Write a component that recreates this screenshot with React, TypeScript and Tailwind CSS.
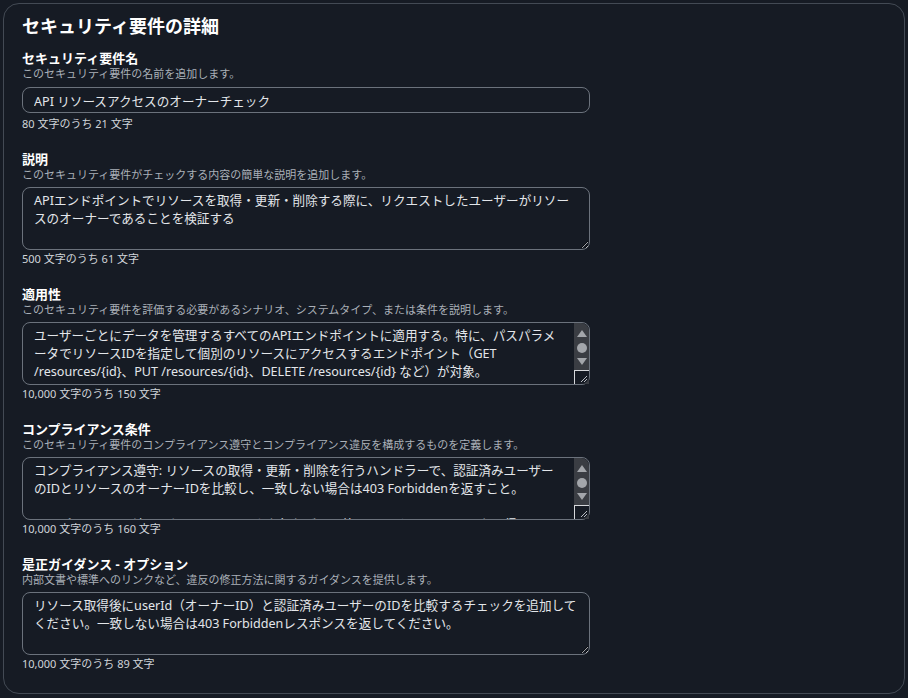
import React from 'react';

const fieldFont = { fontFamily: '"Noto Sans", "Noto Sans CJK JP", sans-serif' };

interface FieldProps {
  label: string;
  hint: string;
  value: string;
  counter: string;
  multiline?: boolean;
  scroll?: boolean;
}

// fake classic scrollbar drawn over a textarea whose text overflows
const ScrollBar = () => (
  <div className="absolute right-px top-px bottom-px w-[15px] flex flex-col rounded-tr-lg bg-[#3a3d43]">
    <div className="flex-1 flex flex-col items-center justify-evenly pt-0.5 text-[#a3a6ab]">
      <svg width="10" height="7" viewBox="0 0 10 7"><path d="M5 0L10 7H0z" fill="currentColor" /></svg>
      <div className="w-[10px] h-[10px] rounded-full bg-[#a3a6ab]" />
      <svg width="10" height="7" viewBox="0 0 10 7"><path d="M0 0h10L5 7z" fill="currentColor" /></svg>
    </div>
    <div className="h-[14px] border-l border-t border-[#d6d8db] bg-[#161b24] flex items-end justify-end rounded-br-lg">
      <svg width="9" height="9" viewBox="0 0 9 9" className="mb-[1px] mr-[1px]">
        <path d="M8 2L2 8M8 5L5 8" stroke="#b8bcc2" strokeWidth="1" />
      </svg>
    </div>
  </div>
);

const Field: React.FC<FieldProps> = ({ label, hint, value, counter, multiline, scroll }) => (
  <div className="mb-5">
    <p className="text-[13px] leading-4 font-bold text-white">{label}</p>
    <p className="mt-px text-[11px] leading-[14px] text-[#aab0b8]">{hint}</p>
    {multiline ? (
      <div className="relative mt-[5px] w-[568px]">
        <textarea
          readOnly
          defaultValue={value}
          className={`block w-full h-[63px] rounded-lg border border-[#6b727c] bg-transparent pl-[11px] ${scroll ? 'pr-[26px] overflow-hidden resize-none' : 'pr-[11px]'} pt-[4px] pb-[4px] text-[12.6px] leading-[18px] text-[#e3e6ea] outline-none`}
          style={fieldFont}
        />
        {scroll && <ScrollBar />}
      </div>
    ) : (
      <input
        readOnly
        defaultValue={value}
        className="mt-[6px] block w-[568px] h-[26px] rounded-lg border border-[#6b727c] bg-transparent px-[11px] text-[12.6px] text-[#e3e6ea] outline-none"
        style={fieldFont}
      />
    )}
    <p className={`${multiline ? 'mt-0.5' : 'mt-1'} text-[11px] leading-[14px] text-[#d0d4d9]`}>{counter}</p>
  </div>
);

export default function App() {
  return (
    <div className="min-h-[698px] bg-[#161b24] p-[3px] [color-scheme:dark]" style={fieldFont}>
      <div className="rounded-2xl border border-[#434a54] pl-[18px] pr-4 pt-[10px] pb-[2px] min-h-[689px]">
        <h2 className="text-[18px] leading-6 font-bold text-white mb-3">セキュリティ要件の詳細</h2>
        <Field
          label="セキュリティ要件名"
          hint="このセキュリティ要件の名前を追加します。"
          value="API リソースアクセスのオーナーチェック"
          counter="80 文字のうち 21 文字"
        />
        <Field
          multiline
          label="説明"
          hint="このセキュリティ要件がチェックする内容の簡単な説明を追加します。"
          value="APIエンドポイントでリソースを取得・更新・削除する際に、リクエストしたユーザーがリソースのオーナーであることを検証する"
          counter="500 文字のうち 61 文字"
        />
        <Field
          multiline
          scroll
          label="適用性"
          hint="このセキュリティ要件を評価する必要があるシナリオ、システムタイプ、または条件を説明します。"
          value="ユーザーごとにデータを管理するすべてのAPIエンドポイントに適用する。特に、パスパラメータでリソースIDを指定して個別のリソースにアクセスするエンドポイント（GET /resources/{id}、PUT /resources/{id}、DELETE /resources/{id} など）が対象。"
          counter="10,000 文字のうち 150 文字"
        />
        <Field
          multiline
          scroll
          label="コンプライアンス条件"
          hint="このセキュリティ要件のコンプライアンス遵守とコンプライアンス違反を構成するものを定義します。"
          value={'コンプライアンス遵守: リソースの取得・更新・削除を行うハンドラーで、認証済みユーザーのIDとリソースのオーナーIDを比較し、一致しない場合は403 Forbiddenを返すこと。\n\nコンプライアンス違反: オーナーチェックを行わずに、他のユーザーのリソースを取得・更新・削除できる場合。'}
          counter="10,000 文字のうち 160 文字"
        />
        <Field
          multiline
          label="是正ガイダンス - オプション"
          hint="内部文書や標準へのリンクなど、違反の修正方法に関するガイダンスを提供します。"
          value="リソース取得後にuserId（オーナーID）と認証済みユーザーのIDを比較するチェックを追加してください。一致しない場合は403 Forbiddenレスポンスを返してください。"
          counter="10,000 文字のうち 89 文字"
        />
      </div>
    </div>
  );
}
